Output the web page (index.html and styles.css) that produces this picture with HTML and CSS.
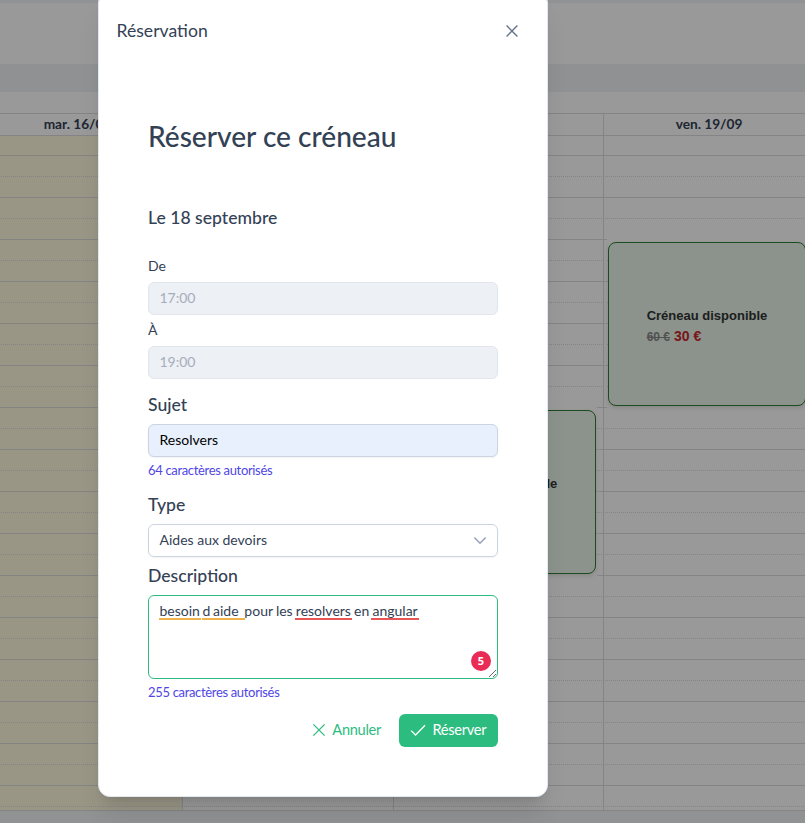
FILE: index.html
```html
<!DOCTYPE html>
<html lang="fr">
<head>
<meta charset="utf-8">
<title>Réservation</title>
<link rel="stylesheet" href="styles.css">
</head>
<body>
<main class="page">
  <div class="strip"></div>
  <div class="toolbar"></div>
  <div class="band"></div>
  <div class="spacer"></div>
  <section class="calendar">
    <div class="days">
      <div class="day">mar. 16/09</div>
      <div class="day"></div>
      <div class="day"></div>
      <div class="day">ven. 19/09</div>
    </div>
    <div class="grid">
      <div class="col today"></div>
      <div class="col"></div>
      <div class="col">
        <div class="event event-thu"><div class="card"><div><b>Créneau disponible</b><p>&nbsp;</p></div></div></div>
      </div>
      <div class="col">
        <div class="event event-fri"><div class="card"><div><b>Créneau disponible</b><p><s>60 €</s> <strong>30 €</strong></p></div></div></div>
      </div>
    </div>
  </section>
</main>
<div class="overlay">
  <div class="dialog">
    <header class="head">
      <span class="head-title">Réservation</span>
      <svg class="close" width="14" height="14" viewBox="0 0 14 14"><path d="M1.6 1.6 12.4 12.4M12.4 1.6 1.6 12.4"/></svg>
    </header>
    <div class="body">
      <h1><span>Réserver ce créneau</span></h1>
      <h2 class="date">Le 18 septembre</h2>
      <div class="label">De</div>
      <div class="field disabled">17:00</div>
      <div class="label label-to">À</div>
      <div class="field disabled">19:00</div>
      <h2 class="subject">Sujet</h2>
      <div class="field filled">Resolvers</div>
      <div class="hint"><span>64 caractères autorisés</span></div>
      <h2 class="type">Type</h2>
      <div class="field select"><span>Aides aux devoirs</span>
        <svg width="14" height="14" viewBox="0 0 14 14"><path d="M1.3 3.5 7 9.2 12.7 3.5"/></svg>
      </div>
      <h2 class="desc">Description</h2>
      <div class="area">
        <span class="warn">besoin</span> <span class="warn wide">d aide&nbsp;</span> pour les <span class="err">resolvers</span> en <span class="err">angular</span>
        <span class="count">5</span>
        <svg class="grip" width="9" height="9" viewBox="0 0 9 9"><path d="M1 8 8 1M5 8 8 5"/></svg>
      </div>
      <div class="hint hint-desc"><span>255 caractères autorisés</span></div>
      <div class="actions">
        <div class="btn text"><svg width="14" height="14" viewBox="0 0 14 14"><path d="M1.4 1.4 12.6 12.6M12.6 1.4 1.4 12.6"/></svg><span>Annuler</span></div>
        <div class="btn primary"><svg width="16" height="14" viewBox="0 0 16 14"><path d="M1.2 7.6 5.6 12 15 2.2"/></svg><span>Réserver</span></div>
      </div>
    </div>
  </div>
</div>
</body>
</html>
```

FILE: styles.css
```css
* { box-sizing: border-box; }
body { margin: 0; height: 823px; overflow: hidden; position: relative; font-family: Lato, "Liberation Sans", sans-serif; font-size: 14px; color: #334155; background: #fff; }
svg { fill: none; stroke: currentColor; flex: none; }
h1, h2, p { margin: 0; font-weight: 500; }

.page { height: 823px; overflow: hidden; display: flex; flex-direction: column; background: #f1f3f6; }
.strip { height: 3px; background: #f1f3f6; }
.toolbar { height: 61px; background: #fff; }
.band { height: 28px; background: #f0f2f5; }
.spacer { height: 21px; background: #fff; }
.calendar { margin-left: -28px; width: 842px; background: #fff; border: solid #ddd; border-width: 1px 0; height: 698px; }
.days { display: grid; grid-template-columns: 211px 211px 210px 210px; height: 22px; line-height: 19px; text-align: center; font-size: 13.7px; font-weight: 700; color: #334155; }
.day { border-right: 1px solid #ddd; border-bottom: 1px solid #ddd; padding-left: 1px; }
.grid { display: grid; grid-template-columns: 211px 211px 210px 210px; height: 674px; }
.col {
  position: relative; border-right: 1px solid #ddd;
  background:
    linear-gradient(transparent 19px, #ddd 19px, #ddd 20px, transparent 20px) 0 0 / 100% 42px,
    linear-gradient(transparent 40px, #ddd 40px, #ddd 41px, transparent 41px) 0 0 / 2px 42px;
}
.col::before {
  content: ""; position: absolute; inset: 0;
  background: linear-gradient(90deg, #fff 1px, transparent 1px) 0 0 / 2px 42px;
  -webkit-mask: linear-gradient(transparent 40px, #000 40px, #000 41px, transparent 41px) 0 0 / 100% 42px;
  mask: linear-gradient(transparent 40px, #000 40px, #000 41px, transparent 41px) 0 0 / 100% 42px;
}
.today { background-color: #fffadf; }
.today::before { background: linear-gradient(90deg, #fffadf 1px, transparent 1px) 0 0 / 2px 42px; }
.event { position: absolute; left: 2px; height: 167px; border-radius: 3px; box-shadow: 0 0 0 1px #fff; padding: 2px 2px 1px; }
.event-fri { top: 104px; width: 202px; }
.event-thu { top: 272px; width: 202px; }
.card { height: 164px; border: 1px solid #2e7d32; border-radius: 8px; background: #e8f5e9; box-shadow: 0 2px 4px rgba(0,0,0,.12); display: flex; align-items: center; justify-content: center; font-family: "Liberation Sans", sans-serif; font-size: 13px; line-height: 21px; color: #333; padding-top: 5px; }
.event-thu .card { padding-top: 3px; }
.card b { font-size: 13px; }
.card p { font-size: 14px; }
.card s { color: #888; font-size: 12px; font-weight: 700; }
.card strong { color: #c9252d; }

.overlay { position: absolute; inset: 0; background: rgba(0,0,0,.4); display: flex; justify-content: center; overflow: hidden; }
.dialog { width: 450px; height: 806px; margin: -9px 0 0 -159px; background: #fff; border: 1px solid #e2e8f0; border-radius: 12px; box-shadow: 0 20px 25px -5px rgba(0,0,0,.1), 0 8px 10px -6px rgba(0,0,0,.1); }
.head { display: flex; justify-content: space-between; align-items: center; height: 40px; margin-top: 19px; padding: 0 28px 0 17.5px; color: #334155; }
.head-title { font-size: 17.6px; line-height: 22px; }
.close { color: #64748b; stroke-width: 1.4; }
.body { padding: 0 49px; }
h1 { font-size: 28.1px; line-height: 40px; margin-top: 65px; }
h2 { font-size: 17.6px; line-height: 26px; }
.date { margin-top: 49px; }
.label { line-height: 20px; margin: 25px 0 6px; }
.label-to { margin: 5px 0 6px; }
.field { height: 33px; border: 1px solid #cbd5e1; border-radius: 6px; padding: 0 10.5px; line-height: 30px; color: #334155; box-shadow: 0 1px 2px rgba(18,18,23,.05); }
.disabled { background: #edf0f5; border-color: #e1e5ee; color: #a5adbd; box-shadow: none; }
.filled { background: #e8f0fe; color: #000; }
.subject { margin: 13px 0 6px; }
.hint { font-size: 13px; letter-spacing: -.33px; line-height: 16px; color: #4f46e5; margin-top: 5px; }
.type { margin: 14px 0 6px; }
.select { display: flex; justify-content: space-between; align-items: center; }
.select span { padding-bottom: 2px; }
.select svg { color: #94a3b8; stroke-width: 1.5; }
.desc { margin: 6px 0 6px; }
.area { position: relative; height: 84px; border: 1px solid #2dbc80; border-radius: 6px; padding: 5px 10.5px; line-height: 20px; white-space: nowrap; word-spacing: -.4px; }
.warn, .err { display: inline-block; height: 19px; line-height: 20px; vertical-align: top; margin: 0 -1px; padding: 0 1px; box-shadow: 0 -2px 0 #f0b24a inset; }
.warn { word-spacing: -1px; }
.wide { margin: 0 -4px 0 -1.5px; padding-right: 4px; }
.err { box-shadow: 0 -2px 0 #e85555 inset; }
.count { position: absolute; right: 6px; bottom: 7px; width: 20px; height: 20px; border-radius: 50%; background: #e92c56; color: #fff; font: 700 11px/20px "Open Sans", sans-serif; text-align: center; }
.grip { position: absolute; right: 0; bottom: 0; color: #555; stroke-width: .9; }
.actions { display: flex; justify-content: flex-end; margin-top: 14px; }
.btn { height: 33px; border-radius: 6px; display: flex; align-items: center; gap: 6.5px; padding: 0 11px; font-size: 14.6px; letter-spacing: -.3px; color: #2dbc80; line-height: 30px; }
.btn span { padding-bottom: 2px; }
.btn svg { stroke-width: 1.3; margin-bottom: 2px; }
.text { margin-right: 7px; }
.primary { background: #2dbc80; color: #fff; width: 99px; }
```
